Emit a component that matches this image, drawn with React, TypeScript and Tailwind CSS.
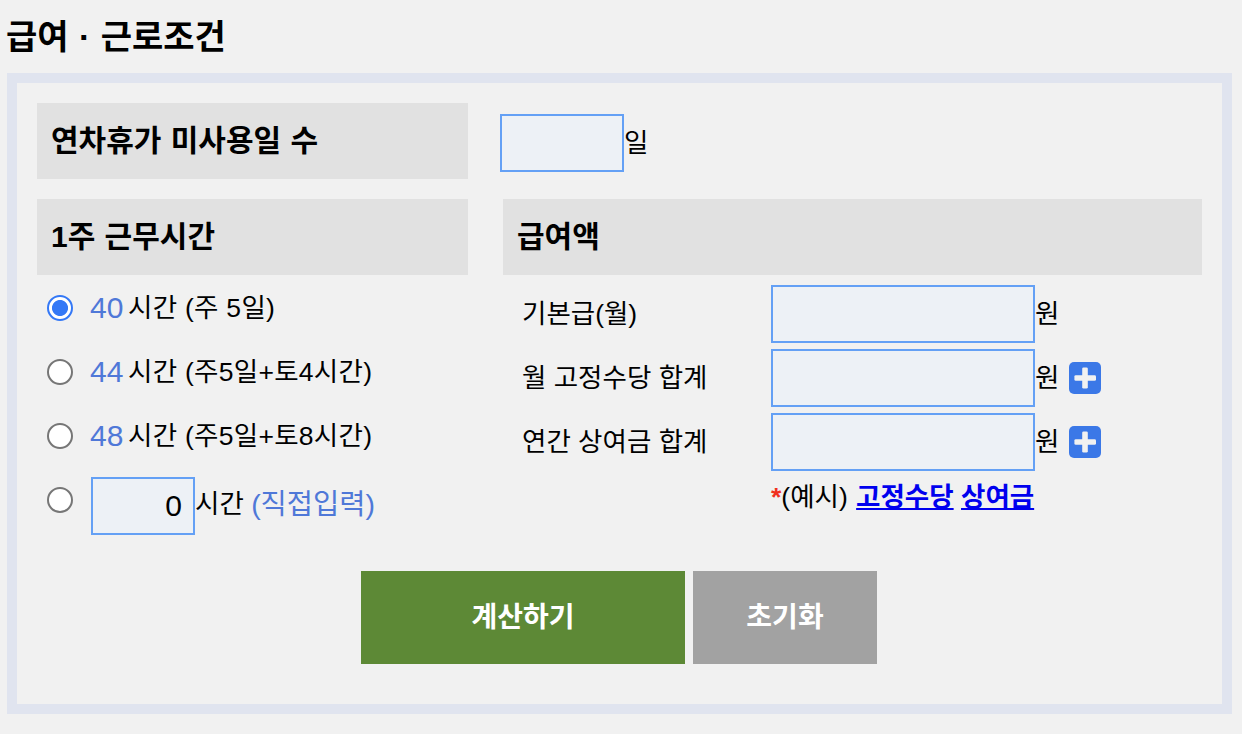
import { useState } from 'react'

const weeklyHours = [
  { value: '40', label: '시간 (주 5일)' },
  { value: '44', label: '시간 (주5일+토4시간)' },
  { value: '48', label: '시간 (주5일+토8시간)' },
]

const payItems = [
  { id: 'base', label: '기본급(월)', addable: false },
  { id: 'allowance', label: '월 고정수당 합계', addable: true },
  { id: 'bonus', label: '연간 상여금 합계', addable: true },
]

const inputStyle =
  'h-[58px] shrink-0 border-2 border-[#64a0f5] bg-[#edf1f6] px-[11px] text-right text-[30px] outline-none'

function SectionTitle({ children }: { children: string }) {
  return (
    <h3 className="flex h-[76px] items-center bg-[#e1e1e1] pl-3.5 text-[30px] leading-none font-bold whitespace-pre [word-spacing:1px]">
      {children}
    </h3>
  )
}

function Radio({ value, checked, onChange }: { value: string; checked: boolean; onChange: () => void }) {
  return (
    <input
      type="radio"
      name="weekly"
      aria-label={value}
      checked={checked}
      onChange={onChange}
      className="size-[26px] shrink-0 appearance-none rounded-full border-2 border-[#767676] bg-white checked:border-[#3478f6] checked:bg-[radial-gradient(circle,#3478f6_7.6px,#fff_8.4px)]"
    />
  )
}

function PlusIcon() {
  return (
    <svg viewBox="0 0 32 32" className="size-8" aria-hidden="true">
      <rect width="32" height="32" rx="5" fill="#3b78e7" />
      <rect x="13.2" y="5.4" width="5.6" height="21.2" rx="1.4" fill="#f1f1f1" />
      <rect x="5.4" y="13.2" width="21.6" height="5.6" rx="1.4" fill="#f1f1f1" />
    </svg>
  )
}

export default function App() {
  const [hours, setHours] = useState('40')

  return (
    <main className="h-[734px] overflow-hidden bg-[#f1f1f1] pl-[7px] font-['Liberation_Sans','Noto_Sans_CJK_KR',sans-serif] text-black">
      <h2 className="-ml-px flex h-[73px] items-center text-[34px] leading-none font-bold whitespace-pre [word-spacing:1px]">
        급여 · 근로조건
      </h2>

      <section className="h-[641px] w-[1225px] border-10 border-[#e0e4ef] p-5">
        <div className="grid grid-cols-[431px_699px] gap-x-[35px] gap-y-5">
          <SectionTitle>연차휴가 미사용일 수</SectionTitle>
          <div className="-ml-[3px] flex items-center pt-1">
            <input aria-label="연차휴가 미사용일 수" className={`${inputStyle} w-[124px]`} />
            <span className="text-[26.5px] leading-none">일</span>
          </div>
          <SectionTitle>1주 근무시간</SectionTitle>
          <SectionTitle>급여액</SectionTitle>
        </div>

        <div className="grid h-[296px] grid-cols-[431px_699px] gap-x-[35px]">
          {/* Weekly working hours */}
          <div className="pt-px pl-2.5 whitespace-pre">
            {weeklyHours.map((item) => (
              <label key={item.value} className="flex h-16 items-center leading-none">
                <Radio value={item.value} checked={hours === item.value} onChange={() => setHours(item.value)} />
                <span className="ml-[17px] w-[38px] text-[30px] text-[#4f78d8]">{item.value}</span>
                <span className="text-[26.5px] tracking-[0.28px]">{item.label}</span>
              </label>
            ))}
            <label className="flex h-16 items-center leading-none">
              <Radio value="custom" checked={hours === 'custom'} onChange={() => setHours('custom')} />
              <span className="ml-[18px] flex items-center pt-3">
                <input aria-label="시간" defaultValue="0" className={`${inputStyle} w-[104px]`} />
                <span className="pb-1 text-[26.5px]">시간 </span>
                <span className="pb-1 text-[28.5px] text-[#4f78d8]">(직접입력)</span>
              </span>
            </label>
          </div>

          {/* Pay */}
          <div className="pt-[7px] pl-[19px]">
            {payItems.map((item) => (
              <div key={item.id} className="flex h-16 items-center text-[26.5px] leading-none">
                <label htmlFor={item.id} className="w-[249px] whitespace-pre">
                  {item.label}
                </label>
                <input id={item.id} className={`${inputStyle} w-[264px]`} />
                <span className="w-[34px]">원</span>
                {item.addable && (
                  <button type="button" aria-label={`${item.label} 추가`}>
                    <PlusIcon />
                  </button>
                )}
              </div>
            ))}
            <p className="ml-[249px] flex h-[46px] items-center text-[26.5px] leading-none whitespace-pre">
              <span className="font-bold text-[#f0301e]">*</span>
              <span>(예시) </span>
              <a href="#allowance" className="ml-px font-bold text-[#0000ee] underline">고정수당</a>
              <span> </span>
              <a href="#bonus" className="font-bold text-[#0000ee] underline">상여금</a>
            </p>
          </div>
        </div>

        <div className="ml-[324px] flex gap-2 text-[28px] leading-none font-bold text-white">
          <button type="button" className="h-[93px] w-[324px] bg-[#5d8936]">계산하기</button>
          <button type="button" className="h-[93px] w-[184px] bg-[#a2a2a2]">초기화</button>
        </div>
      </section>
    </main>
  )
}
